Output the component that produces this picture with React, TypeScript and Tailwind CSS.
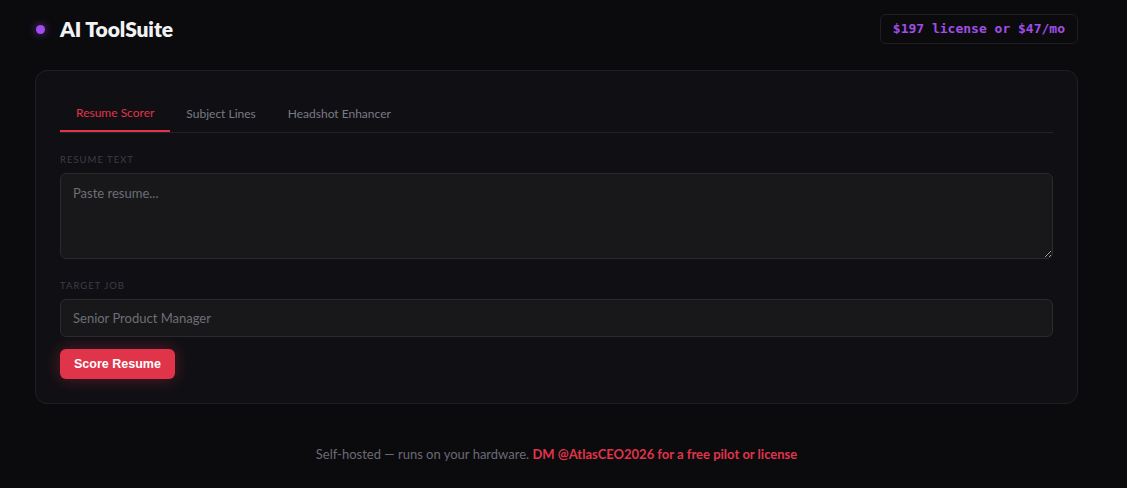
import { useState } from "react";

const tabs = ["Resume Scorer", "Subject Lines", "Headshot Enhancer"];

export default function App() {
  const [active, setActive] = useState(0);

  return (
    <div
      className="min-h-screen bg-[#0b0b0e] text-white"
      style={{ fontFamily: "Lato, 'Noto Sans', sans-serif" }}
    >
      <div className="w-[1043px] ml-[35px]">
        {/* Header */}
        <header className="flex items-center justify-between pt-[14px] h-[70px] pb-[26px]">
          <div className="flex items-center gap-[15px] pl-[1px]">
            <span className="w-[9px] h-[9px] rounded-full bg-[#a24cf0] shadow-[0_0_8px_rgba(162,76,240,0.6)]" />
            <h1 className="text-[21px] font-extrabold tracking-[-0.1px] text-[#f2f2f4]">AI ToolSuite</h1>
          </div>
          <div
            className="h-[30px] px-[12px] flex items-center rounded-md border border-[#1e1e23] text-[13px] font-bold text-[#a04ee6]"
            style={{ fontFamily: "'DejaVu Sans Mono', monospace" }}
          >
            $197 license or $47/mo
          </div>
        </header>

        {/* Card */}
        <section className="rounded-xl border border-[#1f1f25] bg-[#101014] p-6">
          <div className="flex border-b border-[#222228]">
            {tabs.map((t, i) => (
              <button
                key={t}
                onClick={() => setActive(i)}
                className={
                  i === active
                    ? "h-[37px] px-[16px] text-[12px] text-[#e0344a] border-b-2 border-[#e0344a] -mb-px"
                    : "h-[37px] px-[16px] text-[12px] text-[#7a7a85]"
                }
              >
                {t}
              </button>
            ))}
          </div>

          <label className="block mt-[21px] mb-[7px] text-[9.5px] leading-[12px] tracking-[1px] uppercase text-[#3c3c48]">
            Resume Text
          </label>
          <textarea
            placeholder="Paste resume..."
            className="block w-full h-[86px] rounded-md border border-[#2a2a2f] bg-[#18181b] px-[12px] py-[10px] text-[13px] text-[#cfcfd4] placeholder:text-[#6e6e74] outline-none"
          />

          <label className="block mt-[21px] mb-[7px] text-[9.5px] leading-[12px] tracking-[1px] uppercase text-[#3c3c48]">
            Target Job
          </label>
          <input
            defaultValue=""
            placeholder="Senior Product Manager"
            className="block w-full h-[38px] rounded-md border border-[#2a2a2f] bg-[#18181b] px-[12px] text-[13px] text-[#cfcfd4] placeholder:text-[#6e6e74] outline-none"
          />

          <button
            className="mt-[12px] h-[30px] px-[14px] rounded-md bg-[#e0344a] text-white text-[12.5px] font-bold shadow-[0_0_16px_rgba(224,52,74,0.35)]"
            style={{ fontFamily: "'Liberation Sans', Arial, sans-serif" }}
          >
            Score Resume
          </button>
        </section>

        {/* Footer */}
        <footer className="mt-[41px] text-center text-[13px] text-[#6a6a75]">
          Self-hosted — runs on your hardware.{" "}
          <span className="font-bold text-[#e0344a]">DM @AtlasCEO2026 for a free pilot or license</span>
        </footer>
      </div>
    </div>
  );
}
